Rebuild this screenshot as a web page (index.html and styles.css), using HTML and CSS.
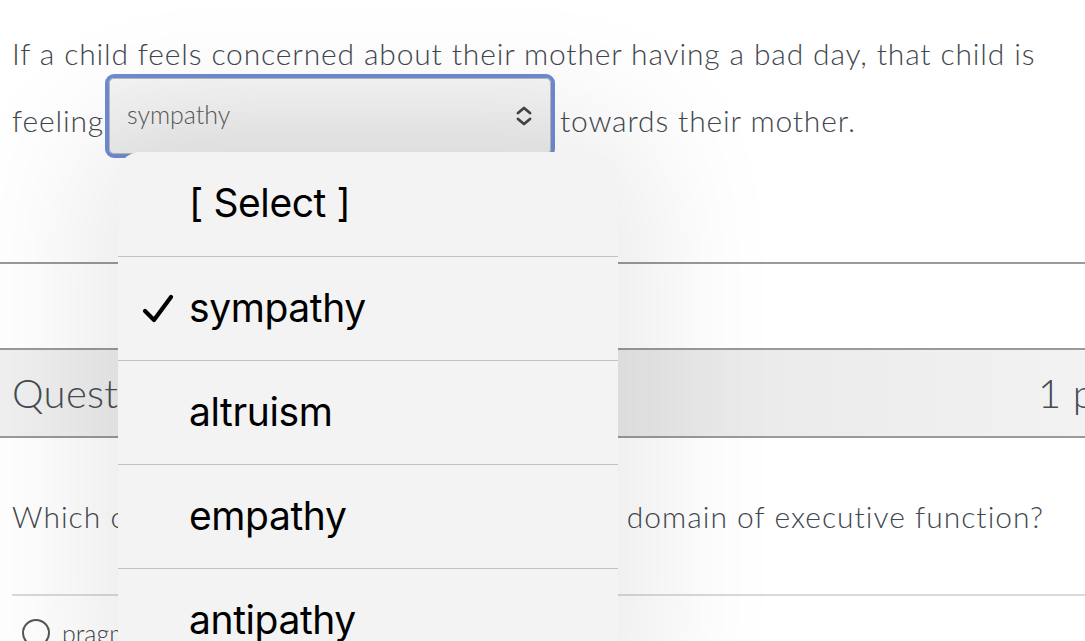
FILE: index.html
```html
<!DOCTYPE html>
<html lang="en">
<head>
<meta charset="utf-8">
<title>Quiz</title>
<link rel="stylesheet" href="styles.css">
</head>
<body>
<div class="page">
  <div class="question-text">
    <p class="stem">If a child feels concerned about their mother having a bad day, that child is feeling <span class="select"><span class="select-value">sympathy</span><svg class="chev" width="20" height="22" viewBox="0 0 20 22"><path d="M4 8 L10 3 L16 8 M4 14 L10 19 L16 14" fill="none" stroke="#454545" stroke-width="2.8" stroke-linecap="round" stroke-linejoin="round"/></svg></span> towards their mother.</p>
  </div>
  <div class="divider"></div>
  <section class="question">
    <header class="qhead"><span class="qname">Question 7</span><span class="qpts">1 pts</span></header>
    <div class="qbody">
      <p class="qtext">Which of the following is NOT considered a domain of executive function?</p>
    </div>
    <div class="answers">
      <label class="answer"><span class="radio"></span><span class="answer-text">pragmatic language</span></label>
    </div>
  </section>
</div>
<div class="picker">
  <div class="picker-item">[ Select ]</div>
  <div class="picker-item"><svg class="check" width="32" height="30" viewBox="0 0 32 30"><path d="M3 17 L12 26 L29 3" fill="none" stroke="#000" stroke-width="4.2" stroke-linecap="round" stroke-linejoin="round"/></svg>sympathy</div>
  <div class="picker-item">altruism</div>
  <div class="picker-item">empathy</div>
  <div class="picker-item">antipathy</div>
</div>
</body>
</html>
```
FILE: styles.css
```css
html, body {
  margin: 0;
  padding: 0;
  overflow: hidden;
  background: #ffffff;
}
body {
  width: 1085px;
  height: 641px;
  position: relative;
  font-family: "Lato", "Liberation Sans", sans-serif;
  font-weight: 300;
  color: #3f474e;
}
.page {
  width: 1125px;
}
.question-text {
  padding: 0 12px;
  height: 262px;
  box-sizing: border-box;
}
.stem {
  margin: 0;
  padding-top: 20px;
  font-size: 30px;
  line-height: 67px;
  letter-spacing: 0.85px;
}
.select {
  display: inline-flex;
  align-items: center;
  justify-content: space-between;
  box-sizing: border-box;
  width: 442px;
  height: 76px;
  margin: -10px 0 -10px -4px;
  vertical-align: middle;
  position: relative;
  top: -9px;
  padding: 0 16px 0 17px;
  border: 1px solid #b9b9b9;
  border-radius: 5px;
  outline: 4px solid #6f8bd2;
  outline-offset: 0;
  background: linear-gradient(#f5f5f5, #ececec);
  line-height: 1;
  letter-spacing: 0;
}
.select-value {
  font-size: 25px;
  color: #5a5a5a;
  position: relative;
  top: -1px;
}
.chev {
  display: block;
}
.divider {
  height: 2px;
  background: #9a9a9a;
}
.question {
  margin-top: 84px;
}
.qhead {
  display: flex;
  justify-content: space-between;
  align-items: center;
  height: 90px;
  box-sizing: border-box;
  padding: 0 0 0 12px;
  border-top: 2px solid #9a9a9a;
  border-bottom: 2px solid #9a9a9a;
  background: linear-gradient(90deg, #f0f0f0, #e9e9e9 60%, #f3f3f3);
  font-size: 40px;
  letter-spacing: 0.3px;
  color: #454c53;
  white-space: nowrap;
}
.qpts {
  width: 87px;
  flex-shrink: 0;
}
.qbody {
  padding: 0 12px;
  height: 156px;
  display: flex;
  align-items: center;
}
.qtext {
  margin: 0;
  font-size: 30px;
  letter-spacing: 1px;
}
.answers {
  margin-left: 12px;
  border-top: 2px solid #dadada;
}
.answer {
  display: flex;
  align-items: center;
  gap: 12px;
  padding: 22px 10px;
  font-size: 25px;
}
.radio {
  width: 28px;
  height: 28px;
  border: 2px solid #555;
  border-radius: 50%;
  box-sizing: border-box;
}
.picker {
  position: absolute;
  left: 118px;
  top: 152px;
  width: 500px;
  height: 560px;
  background: #f3f3f3;
  border-radius: 22px;
  box-shadow: 0 0 140px 30px rgba(0, 0, 0, 0.09);
  overflow: hidden;
  font-family: "Inter", "Liberation Sans", sans-serif;
  font-weight: 400;
  font-size: 39px;
  color: #000;
  letter-spacing: -0.4px;
}
.picker-item {
  height: 104px;
  box-sizing: border-box;
  display: flex;
  align-items: center;
  padding-left: 71px;
  padding-bottom: 3px;
  position: relative;
}
.picker-item + .picker-item {
  border-top: 1px solid #c3c3c3;
}
.check {
  position: absolute;
  left: 24px;
  top: 37px;
}
```
